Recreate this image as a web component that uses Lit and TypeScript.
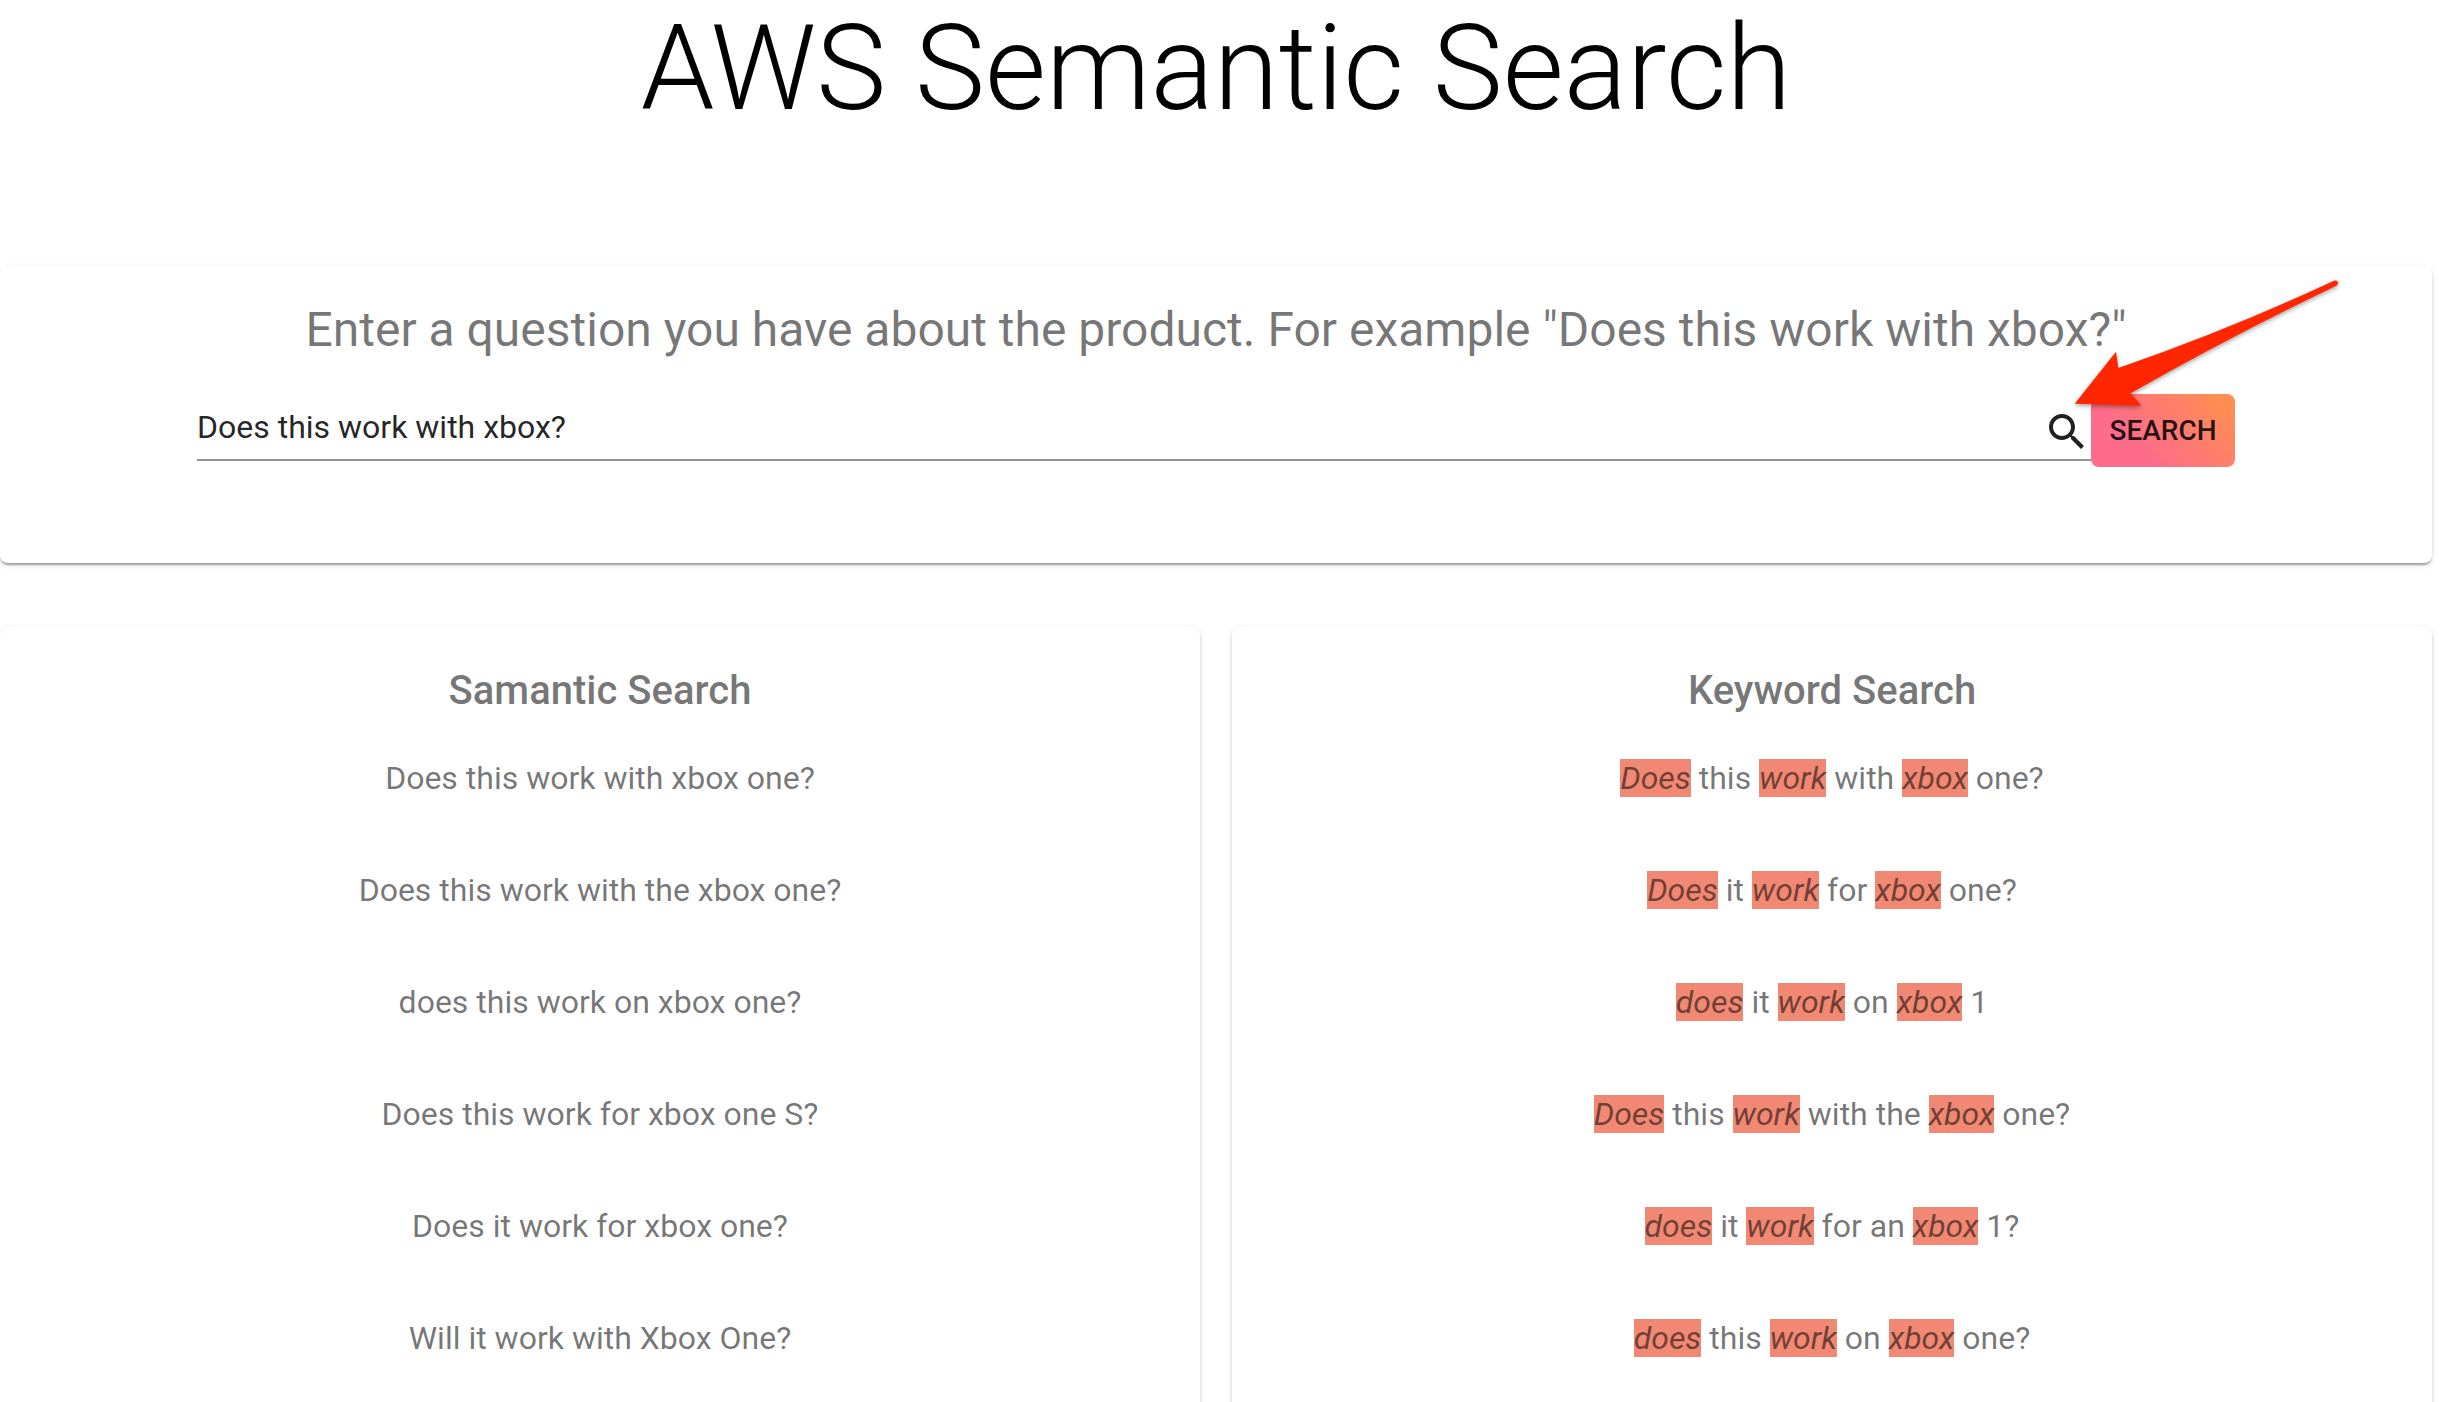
import { LitElement, html, css, svg } from "lit";
import { customElement, property, state } from "lit/decorators.js";

type Part = string | { hit: string };

const hit = (text: string): Part => ({ hit: text });

const SEMANTIC: Part[][] = [
  ["Does this work with xbox one?"],
  ["Does this work with the xbox one?"],
  ["does this work on xbox one?"],
  ["Does this work for xbox one S?"],
  ["Does it work for xbox one?"],
  ["Will it work with Xbox One?"],
];

const KEYWORD: Part[][] = [
  [hit("Does"), " this ", hit("work"), " with ", hit("xbox"), " one?"],
  [hit("Does"), " it ", hit("work"), " for ", hit("xbox"), " one?"],
  [hit("does"), " it ", hit("work"), " on ", hit("xbox"), " 1"],
  [hit("Does"), " this ", hit("work"), " with the ", hit("xbox"), " one?"],
  [hit("does"), " it ", hit("work"), " for an ", hit("xbox"), " 1?"],
  [hit("does"), " this ", hit("work"), " on ", hit("xbox"), " one?"],
];

const cardStyles = css`
  .card {
    background: #fff;
    border-radius: 8px;
    box-shadow:
      0 4px 2px -2px rgba(0, 0, 0, 0.2),
      0 2px 2px 0 rgba(0, 0, 0, 0.14),
      0 2px 6px 0 rgba(0, 0, 0, 0.12);
    box-sizing: border-box;
    padding: 32px;
    color: rgba(0, 0, 0, 0.54);
    text-align: center;
  }
`;

@customElement("result-panel")
export class ResultPanel extends LitElement {
  @property() heading = "";
  @property({ attribute: false }) results: Part[][] = [];

  static styles = [
    cardStyles,
    css`
      :host {
        display: block;
      }
      .heading {
        margin: 0;
        font-size: 40px;
        font-weight: 500;
        line-height: 63px;
      }
      .list {
        list-style: none;
        margin: 0;
        padding: 0;
      }
      .item {
        padding: 32px 0;
        font-size: 32px;
        line-height: 48px;
      }
      .hit {
        background: #f08873;
        font-style: italic;
      }
    `,
  ];

  render() {
    return html`
      <section class="card">
        <h2 class="heading">${this.heading}</h2>
        <ul class="list">
          ${this.results.map(
            (parts) =>
              html`<li class="item">${parts.map((p) =>
                typeof p === "string" ? p : html`<em class="hit">${p.hit}</em>`
              )}</li>`
          )}
        </ul>
      </section>
    `;
  }
}

@customElement("app-root")
export class AppRoot extends LitElement {
  @state() private query = "Does this work with xbox?";

  static styles = [
    cardStyles,
    css`
      :host {
        display: block;
        box-sizing: border-box;
        height: 100vh;
        overflow: hidden;
        padding-right: 26px;
        background: #fff;
        font-family: Roboto, "Liberation Sans", sans-serif;
      }
      .title {
        margin: 0 0 128px;
        font-size: 118px;
        font-weight: 300;
        line-height: 138px;
        text-align: center;
        color: #000;
      }
      .search {
        position: relative;
        padding-bottom: 96px;
      }
      .prompt {
        display: block;
        font-size: 48px;
        line-height: 64px;
      }
      .form {
        display: flex;
        align-items: flex-start;
        margin: 32px 165px 0;
      }
      .field {
        flex: 1;
        display: flex;
        align-items: center;
        margin-top: 11px;
        border-bottom: 2px solid rgba(0, 0, 0, 0.42);
        color: rgba(0, 0, 0, 0.87);
      }
      .input {
        flex: 1;
        min-width: 0;
        box-sizing: border-box;
        height: 54px;
        margin: 0;
        padding: 3px 0 13px;
        border: 0;
        outline: 0;
        background: none;
        color: inherit;
        font: inherit;
        font-size: 32px;
      }
      .icon {
        flex: none;
        width: 48px;
        height: 48px;
        fill: currentColor;
      }
      .button {
        min-width: 144px;
        padding: 12px 16px;
        border: 0;
        border-radius: 8px;
        background: linear-gradient(45deg, #fe6b8b 30%, #ff8e53 90%);
        color: rgba(0, 0, 0, 0.87);
        font: inherit;
        font-size: 28px;
        font-weight: 500;
        line-height: 49px;
        text-transform: uppercase;
        cursor: pointer;
      }
      .arrow {
        position: absolute;
        top: 4px;
        right: 82px;
        width: 290px;
        height: 150px;
        pointer-events: none;
        filter: drop-shadow(0 2px 2px rgba(0, 0, 0, 0.35));
      }
      .results {
        display: grid;
        grid-template-columns: 1fr 1fr;
        gap: 32px;
        margin-top: 64px;
      }
    `,
  ];

  private onInput(e: Event) {
    this.query = (e.target as HTMLInputElement).value;
  }

  private onSubmit(e: Event) {
    e.preventDefault();
  }

  render() {
    return html`
      <h1 class="title">AWS Semantic Search</h1>
      <section class="card search">
        <label class="prompt" for="question"
          >Enter a question you have about the product. For example "Does this work with xbox?"</label
        >
        <form class="form" @submit=${this.onSubmit}>
          <div class="field">
            <input id="question" class="input" type="text" .value=${this.query} @input=${this.onInput} />
            <svg class="icon" viewBox="0 0 24 24" aria-hidden="true">
              ${svg`<path d="M15.5 14h-.79l-.28-.27C15.41 12.59 16 11.11 16 9.5 16 5.91 13.09 3 9.5 3S3 5.91 3 9.5 5.91 16 9.5 16c1.61 0 3.09-.59 4.23-1.57l.27.28v.79l5 4.99L20.49 19l-4.99-5zm-6 0C7.01 14 5 11.99 5 9.5S7.01 5 9.5 5 14 7.01 14 9.5 11.99 14 9.5 14z"/>`}
            </svg>
          </div>
          <button class="button" type="submit">Search</button>
        </form>
        <svg class="arrow" viewBox="240 60 870 450" aria-hidden="true">
          <path
            fill="#ff2600"
            d="M284 461L408 305L415 354Q750 238 1060 93Q1071 89 1074 97Q1075 104 1069 107Q750 260 452 430L484 467Z"
          />
        </svg>
      </section>
      <div class="results">
        <result-panel heading="Samantic Search" .results=${SEMANTIC}></result-panel>
        <result-panel heading="Keyword Search" .results=${KEYWORD}></result-panel>
      </div>
    `;
  }
}
